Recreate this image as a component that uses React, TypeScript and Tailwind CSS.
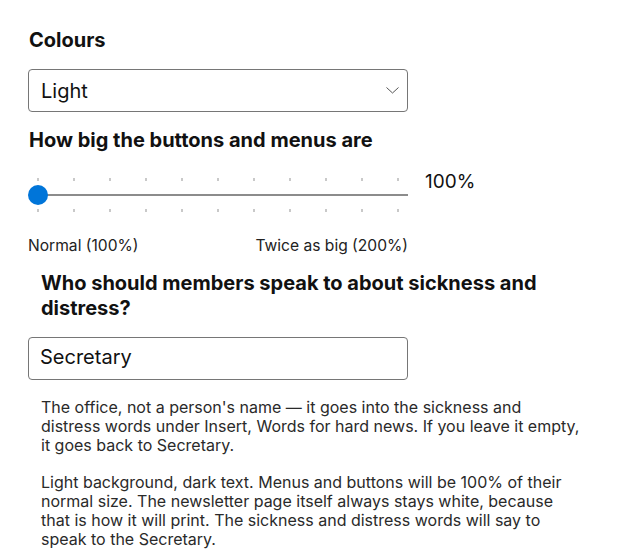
import React from "react";

const ticks = Array.from({ length: 11 }, (_, i) => i);

function Ticks() {
  return (
    <div className="flex justify-between px-[9px]">
      {ticks.map((t) => (
        <span key={t} className="block w-[2px] h-[3px] bg-[#c9c9c9]" />
      ))}
    </div>
  );
}

export default function App() {
  return (
    <div className="w-[620px] h-[560px] bg-white pl-[28px] pt-[28px] font-['Inter','Liberation_Sans',sans-serif] text-[#111]">
      {/* Colours */}
      <h2 className="text-[20px] leading-[24px] font-bold pl-px">Colours</h2>
      <div className="mt-[17px] w-[380px] h-[43px] border border-[#767676] rounded-[4px] flex items-center justify-between pl-[12px] pr-[8px]">
        <span className="text-[20px] leading-[24px]">Light</span>
        <svg width="13" height="7" viewBox="0 0 13 7" fill="none">
          <path d="M0.5 0.5 L6.5 6 L12.5 0.5" stroke="#555" strokeWidth="1" />
        </svg>
      </div>

      {/* Size slider */}
      <h2 className="mt-[16px] text-[20px] leading-[24px] font-bold pl-px">
        How big the buttons and menus are
      </h2>
      <div className="mt-[18px] flex items-start">
        <div className="relative mt-[5px] w-[380px] h-[40px]">
          <div className="absolute left-0 right-0 top-[2.5px]">
            <Ticks />
          </div>
          <div className="absolute left-[10px] right-0 top-[19px] h-[2px] bg-[#8c8c8c]" />
          <div className="absolute left-0 top-[10px] w-[20px] h-[20px] rounded-full bg-[#0075d9]" />
          <div className="absolute left-0 right-0 top-[34px]">
            <Ticks />
          </div>
        </div>
        <span className="ml-[17px] text-[19px] leading-[24px]">100%</span>
      </div>
      <div className="mt-[21px] w-[380px] flex justify-between text-[15.6px] leading-[20px] text-[#222]">
        <span>Normal (100%)</span>
        <span>Twice as big (200%)</span>
      </div>

      {/* Contact office */}
      <h2 className="mt-[15px] ml-[13px] w-[560px] text-[20px] leading-[25px] font-bold">
        Who should members speak to about sickness and distress?
      </h2>
      <div className="mt-[16px] w-[380px] h-[43px] border border-[#767676] rounded-[4px] flex items-center pl-[11px] pb-[3px]">
        <span className="text-[20px] leading-[24px]">Secretary</span>
      </div>
      <div className="mt-[18px] ml-[13px] w-[541px] text-[16px] leading-[19px] text-[#2a2a2a]">
        <p>
          The office, not a person's name — it goes into the sickness and distress words under
          Insert, Words for hard news. If you leave it empty, it goes back to Secretary.
        </p>
        <p className="mt-[18px]">
          Light background, dark text. Menus and buttons will be 100% of their normal size. The
          newsletter page itself always stays white, because that is how it will print. The
          sickness and distress words will say to speak to the Secretary.
        </p>
      </div>
    </div>
  );
}
